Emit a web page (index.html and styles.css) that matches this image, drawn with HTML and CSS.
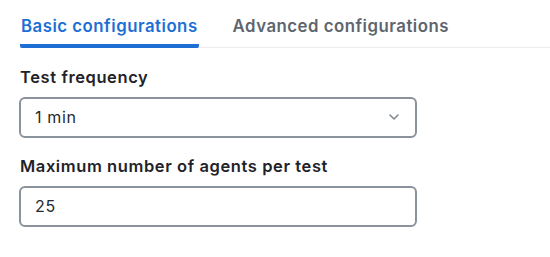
FILE: index.html
```html
<!DOCTYPE html>
<html>
<head>
<meta charset="utf-8">
<link rel="stylesheet" href="styles.css">
</head>
<body>
<div class="page">
  <div class="tabs">
    <div class="tab active">Basic configurations</div>
    <div class="tab">Advanced configurations</div>
  </div>
  <div class="form">
    <div class="field">
      <label class="label">Test frequency</label>
      <div class="control select">
        <span>1 min</span>
        <svg class="chev" width="10" height="6" viewBox="0 0 10 6"><path d="M1 1l4 4 4-4" fill="none" stroke="#7d858e" stroke-width="1.5" stroke-linecap="round" stroke-linejoin="round"/></svg>
      </div>
    </div>
    <div class="field">
      <label class="label">Maximum number of agents per test</label>
      <div class="control">
        <span>25</span>
      </div>
    </div>
  </div>
</div>
</body>
</html>
```
FILE: styles.css
```css
html, body {
  margin: 0;
  padding: 0;
  background: #fff;
}
body {
  font-family: Inter, "Noto Sans", sans-serif;
  color: #1f2329;
}
.page {
  padding: 15px 0 0 20px;
}
.tabs {
  display: flex;
  gap: 33px;
  border-bottom: 1px solid #ebedf0;
}
.tab {
  font-size: 16.8px;
  font-weight: 600;
  letter-spacing: 0.03em;
  color: #5e656e;
  padding: 0 1px 7px;
  border-bottom: 4px solid transparent;
  margin-bottom: -1px;
  line-height: 22px;
}
.tab.active {
  color: #1d6fd3;
  border-bottom-color: #1d6fd3;
  border-radius: 0 0 2px 2px;
}
.form {
  width: 398px;
  margin-left: -1px;
  padding-top: 19px;
  display: flex;
  flex-direction: column;
  gap: 18px;
}
.field {
  display: flex;
  flex-direction: column;
  gap: 10px;
}
.label {
  font-size: 16.5px;
  font-weight: 600;
  letter-spacing: 0.036em;
  line-height: 20px;
  padding-left: 1px;
  color: #1f2329;
}
.control {
  height: 41px;
  box-sizing: border-box;
  border: 2px solid #8a929b;
  border-radius: 6px;
  display: flex;
  align-items: center;
  justify-content: space-between;
  padding: 0 16px 2px 14px;
  font-size: 16px;
  letter-spacing: 0.04em;
  color: #24292f;
}
.chev {
  display: block;
  margin-top: 1px;
}
```
